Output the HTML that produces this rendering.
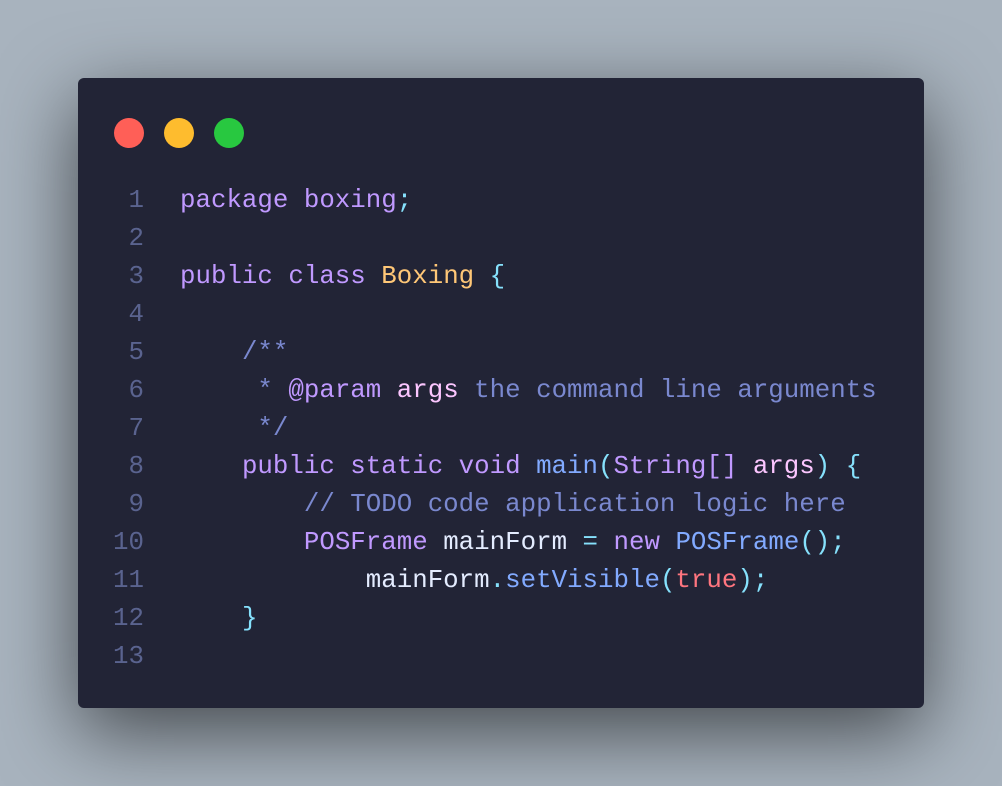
<!DOCTYPE html>
<html><head><meta charset="utf-8"><style>
html,body{margin:0;padding:0;}
body{width:1002px;height:786px;background:#a8b3be;position:relative;overflow:hidden;font-family:"Liberation Mono",monospace;}
.card{position:absolute;left:78px;top:78px;width:846px;height:630px;background:#222436;border-radius:6px;box-shadow:0 24px 80px rgba(0,0,0,0.6);}
.dot{position:absolute;top:40px;width:30px;height:30px;border-radius:50%;}
.code{position:absolute;left:0;top:104px;font-size:25.8px;line-height:38px;white-space:pre;}
.ln{position:absolute;left:0;top:0;width:66px;text-align:right;color:#5a638f;}
.tx{position:absolute;left:102px;top:0;color:#c8d3f5;}
.k{color:#c099ff}.c{color:#7a88cf}.f{color:#82aaff}.p{color:#86e1fc}.y{color:#ffc777}.a{color:#fcc6ff}.r{color:#ff757f}.w{color:#e4ecff}
</style></head><body>
<div class="card">
<div class="dot" style="left:36px;background:#ff5f57"></div>
<div class="dot" style="left:86px;background:#febc2e"></div>
<div class="dot" style="left:136px;background:#28c840"></div>
<div class="code"><div class="ln">1
2
3
4
5
6
7
8
9
10
11
12
13</div><div class="tx"><span class="k">package boxing</span><span class="p">;</span>

<span class="k">public class</span> <span class="y">Boxing</span> <span class="p">{</span>

    <span class="c">/**</span>
<span class="c">     * </span><span class="k">@param</span> <span class="a">args</span><span class="c"> the command line arguments</span>
<span class="c">     */</span>
    <span class="k">public static void</span> <span class="f">main</span><span class="p">(</span><span class="k">String[]</span> <span class="a">args</span><span class="p">)</span> <span class="p">{</span>
        <span class="c">// TODO code application logic here</span>
        <span class="k">POSFrame</span> <span class="w">mainForm</span> <span class="p">=</span> <span class="k">new</span> <span class="f">POSFrame</span><span class="p">();</span>
            <span class="w">mainForm</span><span class="p">.</span><span class="f">setVisible</span><span class="p">(</span><span class="r">true</span><span class="p">);</span>
    <span class="p">}</span></div></div>
</div>
</body></html>
